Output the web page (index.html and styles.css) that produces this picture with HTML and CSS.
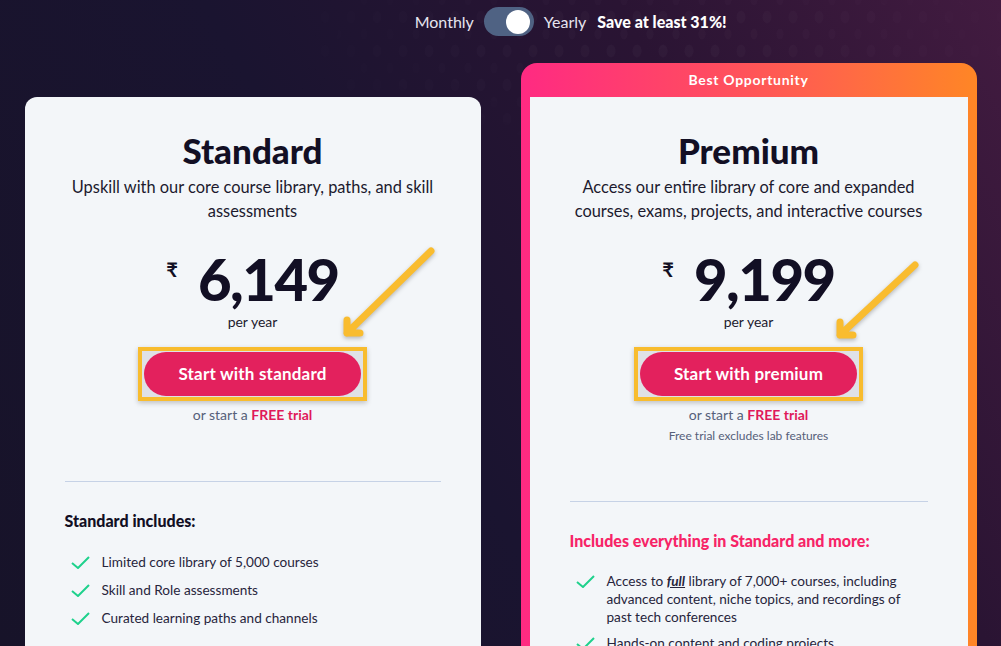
FILE: index.html
```html
<!DOCTYPE html>
<html>
<head>
<title>Plans and Pricing</title>
<link rel="stylesheet" href="styles.css">
</head>
<body>
<div class="sparkle"></div>

<header class="billing">
    <div class="billing-switch">
        <span class="period">Monthly</span>
        <span class="toggle"><span class="knob"></span></span>
        <span class="period">Yearly</span>
        <strong class="save">Save at least 31%!</strong>
    </div>
</header>

<main class="plans">
    <section class="plan plan-standard">
        <svg class="pointer" width="456" height="260">
            <path d="M406 154 L322 236 M322 223 L322 236 L335 236" />
        </svg>
        <h2>Standard</h2>
        <p class="plan-desc">Upskill with our core course library, paths, and skill assessments</p>
        <div class="price"><span class="currency">₹</span><span class="amount">6,149</span></div>
        <div class="per">per year</div>
        <div class="cta-row">
            <span class="highlight"><a class="cta" href="#">Start with standard</a></span>
        </div>
        <p class="trial">or start a <a href="#">FREE trial</a></p>
        <hr>
        <h3>Standard includes:</h3>
        <ul class="features">
            <li><svg class="check" viewBox="0 0 19 13"><path d="M1 7 L7 12 L18 1" /></svg><span>Limited core library of 5,000 courses</span></li>
            <li><svg class="check" viewBox="0 0 19 13"><path d="M1 7 L7 12 L18 1" /></svg><span>Skill and Role assessments</span></li>
            <li><svg class="check" viewBox="0 0 19 13"><path d="M1 7 L7 12 L18 1" /></svg><span>Curated learning paths and channels</span></li>
        </ul>
    </section>

    <div class="plan-frame">
        <div class="ribbon">Best Opportunity</div>
        <section class="plan plan-premium">
            <svg class="pointer" width="438" height="260">
                <path d="M385 168 L310 238 M310 225 L310 238 L323 238" />
            </svg>
            <h2>Premium</h2>
            <p class="plan-desc">Access our entire library of core and expanded courses, exams, projects, and interactive courses</p>
            <div class="price"><span class="currency">₹</span><span class="amount">9,199</span></div>
            <div class="per">per year</div>
            <div class="cta-row">
                <span class="highlight"><a class="cta" href="#">Start with premium</a></span>
            </div>
            <p class="trial">or start a <a href="#">FREE trial</a></p>
            <p class="trial-note">Free trial excludes lab features</p>
            <hr>
            <h3 class="more">Includes everything in Standard and more:</h3>
            <ul class="features features-long">
                <li><svg class="check" viewBox="0 0 19 13"><path d="M1 7 L7 12 L18 1" /></svg><span>Access to <em>full</em> library of 7,000+ courses, including advanced content, niche topics, and recordings of past tech conferences</span></li>
                <li><svg class="check" viewBox="0 0 19 13"><path d="M1 7 L7 12 L18 1" /></svg><span>Hands-on content and coding projects</span></li>
                <li><svg class="check" viewBox="0 0 19 13"><path d="M1 7 L7 12 L18 1" /></svg><span>Certification practice exams</span></li>
            </ul>
        </section>
    </div>
</main>
</body>
</html>
```

FILE: styles.css
```css
body {
    margin: 0;
    height: 646px;
    overflow: hidden;
    position: relative;
    font-family: Lato, "Noto Sans", sans-serif;
    color: #1c1a2e;
    background: linear-gradient(60deg, #171329 0%, #1a1430 42%, #2a1433 72%, #421b40 100%);
}

/* faint dotted glow behind the switch, two staggered layers */
.sparkle {
    position: absolute;
    top: 0;
    left: 0;
    width: 100%;
    height: 260px;
    pointer-events: none;
    background:
        radial-gradient(ellipse 5px 7px at center, rgba(255,255,255,0.03) 0 80%, transparent 100%) 0 0 / 26px 34px,
        radial-gradient(ellipse 4px 6px at center, rgba(255,255,255,0.025) 0 80%, transparent 100%) 13px 17px / 26px 34px;
    -webkit-mask-image: radial-gradient(ellipse 430px 140px at 660px 40px, #000 0%, transparent 100%);
    mask-image: radial-gradient(ellipse 430px 140px at 660px 40px, #000 0%, transparent 100%);
}

.billing {
    position: relative;
    display: flex;
    justify-content: center;
    padding-top: 7px;
    height: 29px;
}

.billing-switch {
    position: relative;
    display: flex;
    align-items: center;
    gap: 10px;
    color: #e6e4ef;
    font-size: 16px;
}

.toggle {
    display: flex;
    align-items: center;
    justify-content: flex-end;
    box-sizing: border-box;
    width: 50px;
    height: 29px;
    padding: 0 4px;
    border-radius: 15px;
    background: #4f6283;
}

.knob {
    width: 24px;
    height: 24px;
    border-radius: 50%;
    background: #fff;
}

.save {
    position: absolute;
    left: calc(100% + 11px);
    white-space: nowrap;
    color: #fff;
    font-weight: 900;
}

.plans {
    position: relative;
    display: flex;
    justify-content: center;
    align-items: flex-start;
    gap: 40px;
    margin-top: 27px;
}

.plan {
    position: relative;
    box-sizing: border-box;
    min-height: 620px;
    padding: 33px 40px 0;
    background: #f3f6f9;
    text-align: center;
}

.plan-standard {
    width: 456px;
    margin-top: 34px;
    border-radius: 12px 12px 0 0;
}

.plan-frame {
    width: 456px;
    box-sizing: border-box;
    padding: 0 9px;
    border-radius: 16px 16px 0 0;
    background: linear-gradient(90deg, #ff2a82 0%, #ff4a62 40%, #ff6a44 72%, #ff8625 100%);
}

.ribbon {
    height: 34px;
    line-height: 34px;
    text-align: center;
    color: #fff;
    font-size: 14px;
    font-weight: 700;
    letter-spacing: 0.7px;
}

.pointer {
    position: absolute;
    top: 0;
    left: 0;
    overflow: visible;
    pointer-events: none;
    filter: drop-shadow(0 2px 2px rgba(0,0,0,0.25));
}

.pointer path {
    fill: none;
    stroke: #f9bc2f;
    stroke-width: 7;
    stroke-linecap: round;
    stroke-linejoin: round;
}

h2 {
    margin: 0;
    font-size: 35px;
    line-height: 40px;
    font-weight: 900;
    color: #120f24;
}

.plan-desc {
    margin: 5px 0 0;
    font-size: 16.4px;
    line-height: 24px;
}

.price {
    display: flex;
    justify-content: center;
    align-items: flex-start;
    height: 60px;
    margin-top: 26px;
    color: #120f24;
}

.currency {
    margin: 10px 20px 0 0;
    font-size: 20px;
    line-height: 20px;
    font-weight: 700;
}

.amount {
    font-size: 58px;
    line-height: 60px;
    font-weight: 900;
    letter-spacing: -1.5px;
}

.per {
    margin-top: 3px;
    font-size: 14px;
    line-height: 20px;
}

.cta-row {
    display: flex;
    justify-content: center;
    margin-top: 15px;
}

.highlight {
    padding: 1px 2px;
    border: 4px solid #f8bc2e;
    background: #dfe1e6;
    box-shadow: 0 2px 5px rgba(0,0,0,0.22);
}

.cta {
    display: block;
    height: 44px;
    line-height: 44px;
    padding: 0 34px;
    border-radius: 22px;
    background: #e3215d;
    color: #fff;
    font-size: 17px;
    font-weight: 700;
    letter-spacing: 0.2px;
    text-decoration: none;
}

.trial {
    margin: 4px 0 0;
    font-size: 14px;
    line-height: 20px;
    color: #56607a;
}

.trial a {
    color: #e0195a;
    font-weight: 700;
    text-decoration: none;
}

.trial-note {
    margin: 2px 0 0;
    font-size: 12px;
    line-height: 18px;
    color: #56607a;
}

hr {
    margin: 56px 0 0;
    border: 0;
    border-top: 1px solid #c6d2e6;
}

h3 {
    margin: 27px 0 0;
    text-align: left;
    font-size: 16px;
    line-height: 24px;
    font-weight: 900;
    color: #120f24;
}

h3.more {
    color: #f72467;
}

.features {
    list-style: none;
    margin: 19px 0 0;
    padding: 0 0 0 6px;
    text-align: left;
    font-size: 13.6px;
    line-height: 20px;
    color: #27253c;
}

.features li {
    display: flex;
    gap: 12px;
}

.features li + li {
    margin-top: 8px;
}

.features-long {
    margin-top: 19px;
    line-height: 18px;
}

.features em {
    font-weight: 700;
    text-decoration: underline;
}

.check {
    flex: none;
    width: 19px;
    height: 13px;
    margin-top: 4px;
}

.features-long .check {
    margin-top: 3px;
}

.check path {
    fill: none;
    stroke: #1ed18c;
    stroke-width: 2;
}
```
